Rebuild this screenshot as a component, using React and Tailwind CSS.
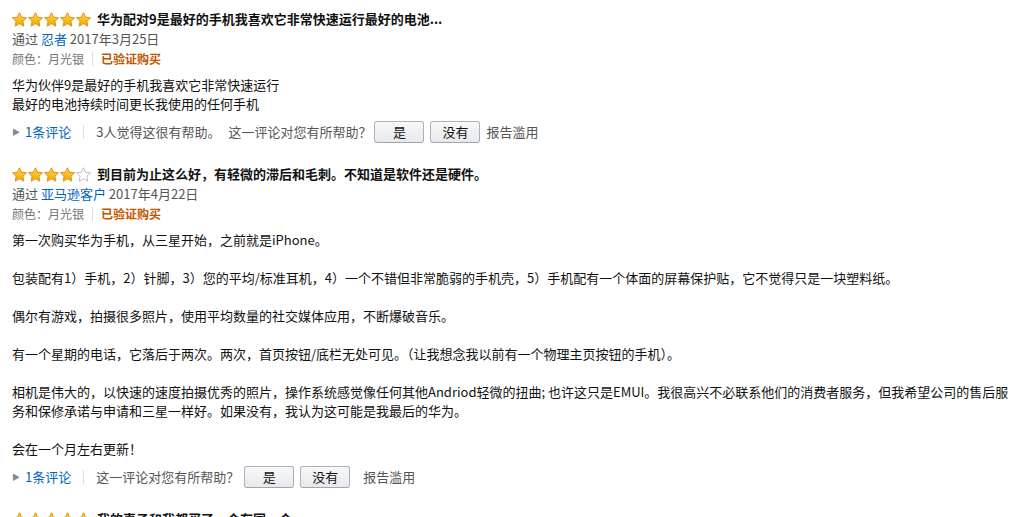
import React from "react";

const font = { fontFamily: '"Noto Sans CJK SC", "Noto Sans", sans-serif' };

function Star({ filled }) {
  return (
    <svg width="15" height="15" viewBox="1 1.2 22 21" className="block">
      <defs>
        <linearGradient id="sg" x1="0" y1="0" x2="0" y2="1">
          <stop offset="0" stopColor="#ffd84d" />
          <stop offset="1" stopColor="#f5a300" />
        </linearGradient>
      </defs>
      <path
        d="M12 1.8l3.1 6.6 7.2.9-5.3 5 1.4 7.1L12 17.9l-6.4 3.5 1.4-7.1-5.3-5 7.2-.9z"
        fill={filled ? "url(#sg)" : "#ffffff"}
        stroke={filled ? "#d98a00" : "#b5b5b5"}
        strokeWidth="1.3"
        strokeLinejoin="round"
      />
    </svg>
  );
}

function Stars({ n }) {
  return (
    <div className="flex gap-[1px]">
      {[0, 1, 2, 3, 4].map((i) => (
        <Star key={i} filled={i < n} />
      ))}
    </div>
  );
}

function Btn({ children }) {
  return (
    <button className="h-[22px] w-[50px] rounded-[3px] border border-[#adb1b8] border-b-[#a2a6ac] bg-gradient-to-b from-[#f7f8fa] to-[#e7e9ec] text-[13px] leading-[20px] text-[#111] shadow-[0_1px_0_rgba(255,255,255,0.6)_inset]">
      {children}
    </button>
  );
}

function Review({ stars, title, author, date, body, helpful, reportGap, btnGap }) {
  return (
    <div className="mb-[21px]">
      <div className="flex h-[20px] items-center gap-[6px]">
        <Stars n={stars} />
        <span className="text-[13px] font-bold text-[#111]">{title}</span>
      </div>
      <div className="text-[13px] leading-[20px] text-[#555]">
        通过 <span className="text-[#0066c0]">{author}</span> {date}
      </div>
      <div className="flex items-center text-[12px] leading-[20px] text-[#767676]">
        <span>颜色：月光银</span>
        <span className="mx-[8px] h-[14px] w-px bg-[#ddd]" />
        <span className="font-bold text-[#c45500]">已验证购买</span>
      </div>
      <div className="mt-[6px] text-[13px] leading-[19px] text-[#111]">
        {body.map((p, i) => (
          <p key={i} className={i < body.length - 1 ? "mb-[19px]" : ""}>
            {p}
          </p>
        ))}
      </div>
      <div className="mt-[8px] flex h-[22px] items-center text-[13px] text-[#555]">
        <span className="mr-[5px] text-[8px] text-[#888]">▶</span>
        <span className="text-[#0066c0]">1条评论</span>
        <span className="mx-[12px] h-[14px] w-px bg-[#ddd]" />
        {helpful && <span className="mr-[8px]">{helpful}</span>}
        <span>这一评论对您有所帮助？</span>
        <div className={`flex gap-[6px] ${btnGap}`}>
          <Btn>是</Btn>
          <Btn>没有</Btn>
        </div>
        <span className={reportGap}>报告滥用</span>
      </div>
    </div>
  );
}

export default function App() {
  return (
    <div style={font} className="h-[517px] w-[1018px] overflow-hidden bg-white pl-[12px] pr-[6px] pt-[9px]">
      <Review
        stars={5}
        title="华为配对9是最好的手机我喜欢它非常快速运行最好的电池..."
        author="忍者"
        date="2017年3月25日"
        body={[
          <>
            华为伙伴9是最好的手机我喜欢它非常快速运行
            <br />
            最好的电池持续时间更长我使用的任何手机
          </>,
        ]}
        helpful="3人觉得这很有帮助。"
        btnGap="ml-[3px]"
        reportGap="ml-[6px]"
      />
      <Review
        stars={4}
        title="到目前为止这么好，有轻微的滞后和毛刺。不知道是软件还是硬件。"
        author="亚马逊客户"
        date="2017年4月22日"
        body={[
          "第一次购买华为手机，从三星开始，之前就是iPhone。",
          "包装配有1）手机，2）针脚，3）您的平均/标准耳机，4）一个不错但非常脆弱的手机壳，5）手机配有一个体面的屏幕保护贴，它不觉得只是一块塑料纸。",
          "偶尔有游戏，拍摄很多照片，使用平均数量的社交媒体应用，不断爆破音乐。",
          "有一个星期的电话，它落后于两次。两次，首页按钮/底栏无处可见。（让我想念我以前有一个物理主页按钮的手机）。",
          "相机是伟大的，以快速的速度拍摄优秀的照片，操作系统感觉像任何其他Andriod轻微的扭曲; 也许这只是EMUI。我很高兴不必联系他们的消费者服务，但我希望公司的售后服务和保修承诺与申请和三星一样好。如果没有，我认为这可能是我最后的华为。",
          "会在一个月左右更新！",
        ]}
        btnGap="ml-[5px]"
        reportGap="ml-[13px]"
      />
      <div className="flex h-[20px] items-center gap-[6px]">
        <Stars n={5} />
        <span className="text-[13px] font-bold text-[#111]">我的妻子和我都买了一个有同一个...</span>
      </div>
    </div>
  );
}
